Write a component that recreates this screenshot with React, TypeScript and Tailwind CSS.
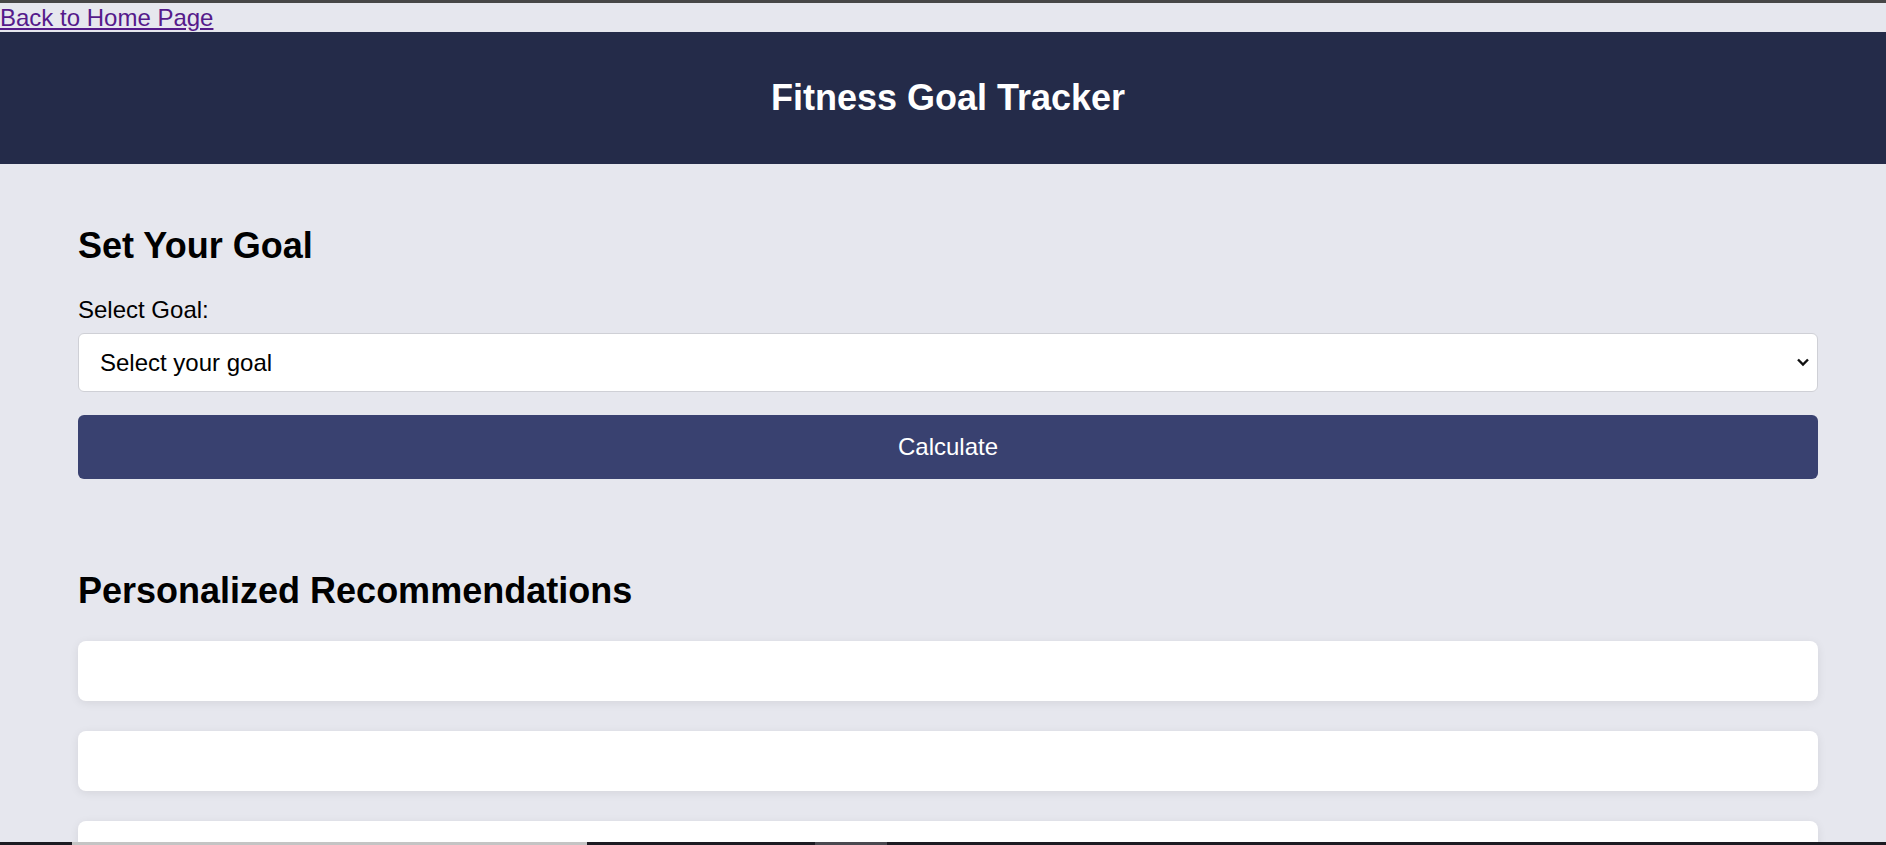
const recommendations = ['', '', ''];

export default function App() {
  return (
    <div className="min-h-screen bg-[#e6e7ee] font-['Liberation_Sans',Arial,sans-serif] text-black">
      {/* browser chrome edge */}
      <div className="h-[3px] bg-[#474747]" />

      <a href="#" className="block text-[24px] leading-[29px] text-[#551a8b] underline">
        Back to Home Page
      </a>

      <header className="flex h-[132px] items-center justify-center bg-[#242b49] pl-[78px] pr-[68px]">
        <h1 className="text-[36px] font-bold leading-[42px] text-white">Fitness Goal Tracker</h1>
      </header>

      <main className="pl-[78px] pr-[68px] pt-[61px]">
        <section>
          <h2 className="text-[36px] font-bold leading-[42px]">Set Your Goal</h2>
          <label htmlFor="goal" className="mt-[30px] block text-[24px] leading-[26px]">
            Select Goal:
          </label>
          <div className="relative mt-[10px]">
            <select
              id="goal"
              defaultValue=""
              className="block h-[59px] w-full appearance-none rounded-[6px] border border-[#cfd0d6] bg-white pl-[21px] pr-[40px] text-[24px] text-black"
            >
              <option value="">Select your goal</option>
              <option value="lose">Lose weight</option>
              <option value="gain">Build muscle</option>
              <option value="fit">Stay fit</option>
            </select>
            <svg
              className="pointer-events-none absolute right-[8px] top-[22px] h-[14px] w-[14px]"
              viewBox="0 0 14 14"
              fill="none"
              stroke="#111"
              strokeWidth="2.4"
            >
              <path d="M2 4.5l5 5 5-5" />
            </svg>
          </div>
          <button className="mt-[23px] flex h-[64px] w-full items-center justify-center rounded-[6px] bg-[#394170] text-[24px] text-white">
            Calculate
          </button>
        </section>

        <section className="mt-[91px]">
          <h2 className="text-[36px] font-bold leading-[42px]">Personalized Recommendations</h2>
          <div className="mt-[29px] flex flex-col gap-[30px] pb-[40px]">
            {recommendations.map((text, i) => (
              <div key={i} className="h-[60px] rounded-[8px] bg-white shadow-[0_2px_10px_rgba(0,0,0,0.08)]">
                {text}
              </div>
            ))}
          </div>
        </section>
      </main>

      {/* taskbar edge */}
      <div className="fixed inset-x-0 bottom-0 flex h-[3px] bg-[#1c1b22]">
        <div className="ml-[72px] w-[515px] bg-[#c4c4c4]" />
        <div className="ml-[228px] w-[72px] bg-[#4a4950]" />
      </div>
    </div>
  );
}
